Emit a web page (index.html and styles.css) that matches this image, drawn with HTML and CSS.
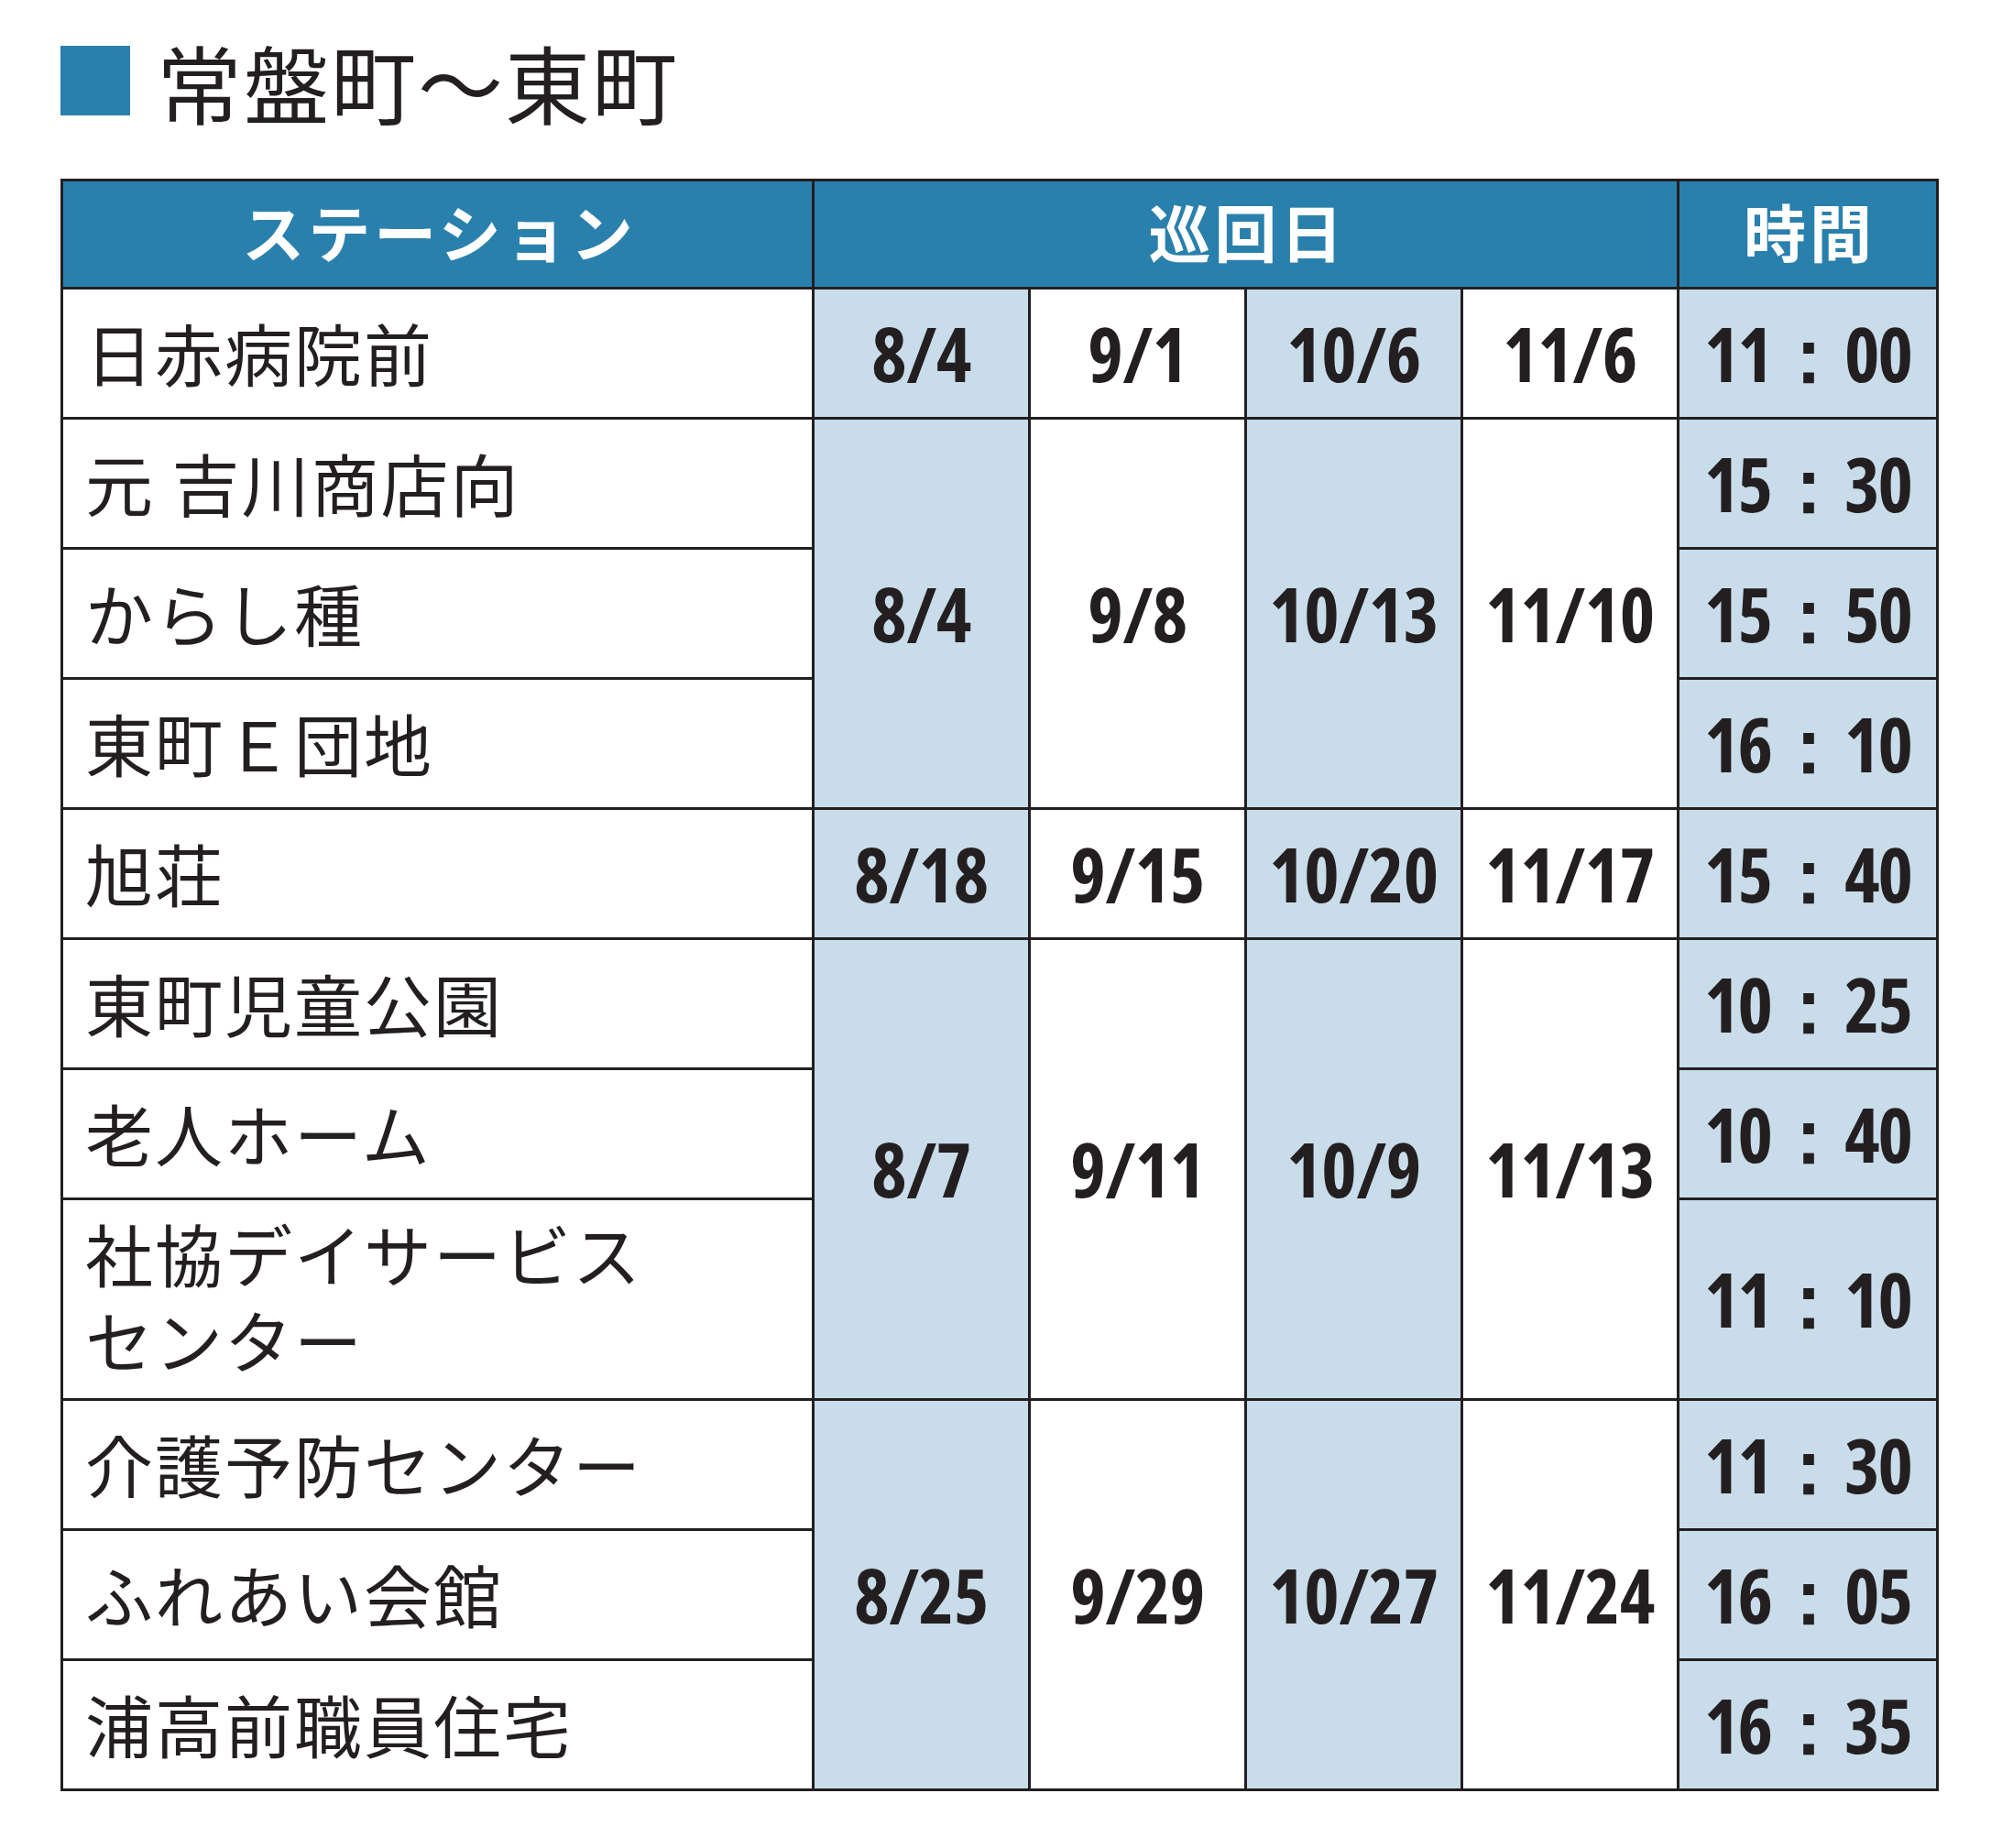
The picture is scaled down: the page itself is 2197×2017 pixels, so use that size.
FILE: index.html
```html
<!DOCTYPE html>
<html lang="ja">
<head>
<meta charset="utf-8">
<title>常盤町〜東町</title>
<link rel="stylesheet" href="styles.css">
</head>
<body>
<div class="page">
  <h1 class="title"><span class="mark"></span><span class="title-text">常盤町〜東町</span></h1>
  <table class="sched">
    <colgroup>
      <col class="c-st"><col class="c-d"><col class="c-d"><col class="c-d"><col class="c-d"><col class="c-t">
    </colgroup>
    <thead>
      <tr class="hd">
        <th>ステーション</th>
        <th colspan="4">巡回日</th>
        <th>時間</th>
      </tr>
    </thead>
    <tbody>
      <tr>
        <td class="st">日赤病院前</td>
        <td class="num blue">8/4</td><td class="num">9/1</td><td class="num blue">10/6</td><td class="num">11/6</td>
        <td class="num blue tm">11：00</td>
      </tr>
      <tr>
        <td class="st">元 吉川商店向</td>
        <td class="num blue" rowspan="3">8/4</td><td class="num" rowspan="3">9/8</td><td class="num blue" rowspan="3">10/13</td><td class="num" rowspan="3">11/10</td>
        <td class="num blue tm">15：30</td>
      </tr>
      <tr>
        <td class="st">からし種</td>
        <td class="num blue tm">15：50</td>
      </tr>
      <tr>
        <td class="st">東町Ｅ団地</td>
        <td class="num blue tm">16：10</td>
      </tr>
      <tr>
        <td class="st">旭荘</td>
        <td class="num blue">8/18</td><td class="num">9/15</td><td class="num blue">10/20</td><td class="num">11/17</td>
        <td class="num blue tm">15：40</td>
      </tr>
      <tr>
        <td class="st">東町児童公園</td>
        <td class="num blue" rowspan="3">8/7</td><td class="num" rowspan="3">9/11</td><td class="num blue" rowspan="3">10/9</td><td class="num" rowspan="3">11/13</td>
        <td class="num blue tm">10：25</td>
      </tr>
      <tr>
        <td class="st">老人ホーム</td>
        <td class="num blue tm">10：40</td>
      </tr>
      <tr class="tall">
        <td class="st two"><span class="ln">社協デイサービス</span><span class="ln">センター</span></td>
        <td class="num blue tm">11：10</td>
      </tr>
      <tr>
        <td class="st">介護予防センター</td>
        <td class="num blue" rowspan="3">8/25</td><td class="num" rowspan="3">9/29</td><td class="num blue" rowspan="3">10/27</td><td class="num" rowspan="3">11/24</td>
        <td class="num blue tm">11：30</td>
      </tr>
      <tr>
        <td class="st">ふれあい会館</td>
        <td class="num blue tm">16：05</td>
      </tr>
      <tr>
        <td class="st">浦高前職員住宅</td>
        <td class="num blue tm">16：35</td>
      </tr>
    </tbody>
  </table>
</div>
</body>
</html>
```

FILE: styles.css
```css
html, body {
  margin: 0;
  padding: 0;
  background: #ffffff;
}

.page {
  padding: 50px 0 0 66px;
  font-family: "Noto Sans CJK JP", "Noto Sans", sans-serif;
  color: #231f20;
}

.title {
  margin: 0;
  display: flex;
  align-items: center;
  height: 76px;
  font-weight: 400;
}

.mark {
  width: 76px;
  height: 76px;
  background: #2a80ad;
  flex: none;
}

.title-text {
  margin-left: 29px;
  font-size: 93px;
  line-height: 1;
  letter-spacing: 2px;
  position: relative;
  top: 0;
}

.sched {
  margin-top: 69px;
  border-collapse: collapse;
  table-layout: fixed;
  width: 2048px;
  border: 3px solid #231f20;
}

.c-st { width: 820px; }
.c-d { width: 236px; }
.c-t { width: 283px; }

.sched th,
.sched td {
  border: 3px solid #231f20;
  padding: 0;
}

.hd {
  height: 118px;
}

.hd th {
  background: #2a80ad;
  color: #ffffff;
  font-family: "Noto Sans CJK JP", sans-serif;
  font-weight: 700;
  font-size: 68px;
  line-height: 1;
  letter-spacing: 4px;
  text-align: center;
  vertical-align: middle;
  padding: 0 0 8px 4px;
}

.sched tbody tr {
  height: 142px;
}

.sched tbody tr.tall {
  height: 219px;
}

.st {
  font-size: 74px;
  font-weight: 400;
  line-height: 90px;
  padding: 0 0 4px 24px !important;
  text-align: left;
  vertical-align: middle;
  letter-spacing: 2px;
  white-space: nowrap;
}

.st.two {
  padding-bottom: 8px !important;
}

.ln {
  display: block;
  height: 94px;
  line-height: 94px;
}

.num {
  font-family: "Open Sans", "Noto Sans", sans-serif;
  font-weight: 700;
  font-stretch: 75%;
  font-size: 82px;
  line-height: 1;
  text-align: center;
  vertical-align: middle;
  letter-spacing: -0.5px;
  background: #ffffff;
  padding-bottom: 2px !important;
}

.num.blue {
  background: #c9dcea;
}

.tm {
  letter-spacing: -2px;
}
```
